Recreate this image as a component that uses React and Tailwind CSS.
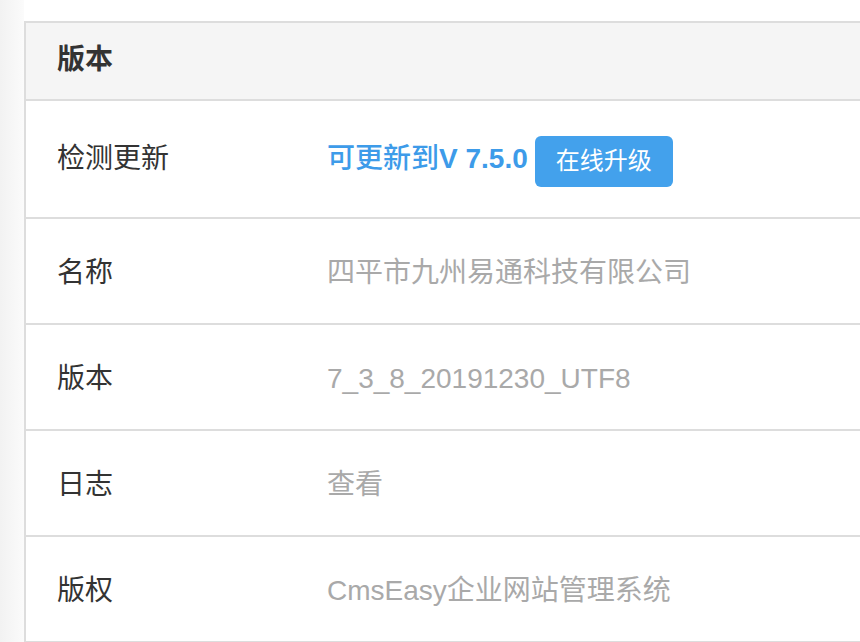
import React from "react";

const rows = [
  { label: "名称", value: "四平市九州易通科技有限公司" },
  { label: "版本", value: "7_3_8_20191230_UTF8" },
  { label: "日志", value: "查看" },
  { label: "版权", value: "CmsEasy企业网站管理系统" },
];

export default function App() {
  return (
    <div
      className="flex h-[642px] w-[860px] overflow-hidden bg-white"
      style={{ fontFamily: '"Liberation Sans", "Noto Sans CJK SC", sans-serif' }}
    >
      {/* sidebar edge */}
      <div className="w-[24px] shrink-0 bg-gradient-to-r from-[#f2f2f2] to-[#fbfbfb]" />

      <main className="flex-1 pt-[21px]">
        <div className="border-l-2 border-t-2 border-[#dddddd]">
          {/* header */}
          <div className="flex h-[78px] items-center border-b-2 border-[#dddddd] bg-[#f5f5f5] pb-[3px] pl-[31px]">
            <span className="text-[28px] font-bold leading-[40px] text-[#333333]">版本</span>
          </div>

          {/* update row */}
          <div className="flex h-[118px] items-center border-b-2 border-[#dddddd]">
            <div className="w-[301px] shrink-0 pl-[31px] text-[28px] leading-[40px] text-[#333333]">
              检测更新
            </div>
            <div className="flex items-center">
              <span className="text-[28px] font-medium leading-[40px] text-[#3d9be9]">
                可更新到<span className="font-bold">V 7.5.0</span>
              </span>
              <button className="ml-[7px] mt-[4px] h-[51px] w-[138px] rounded-[6px] bg-[#43a1ec] text-[24px] text-white">
                在线升级
              </button>
            </div>
          </div>

          {rows.map((r) => (
            <div key={r.label} className="flex h-[106px] items-center border-b-2 border-[#dddddd] pt-[3px]">
              <div className="w-[301px] shrink-0 pl-[31px] text-[28px] leading-[40px] text-[#333333]">
                {r.label}
              </div>
              <div className="text-[28px] leading-[40px] text-[#a9a9a9]">{r.value}</div>
            </div>
          ))}
        </div>
      </main>
    </div>
  );
}
